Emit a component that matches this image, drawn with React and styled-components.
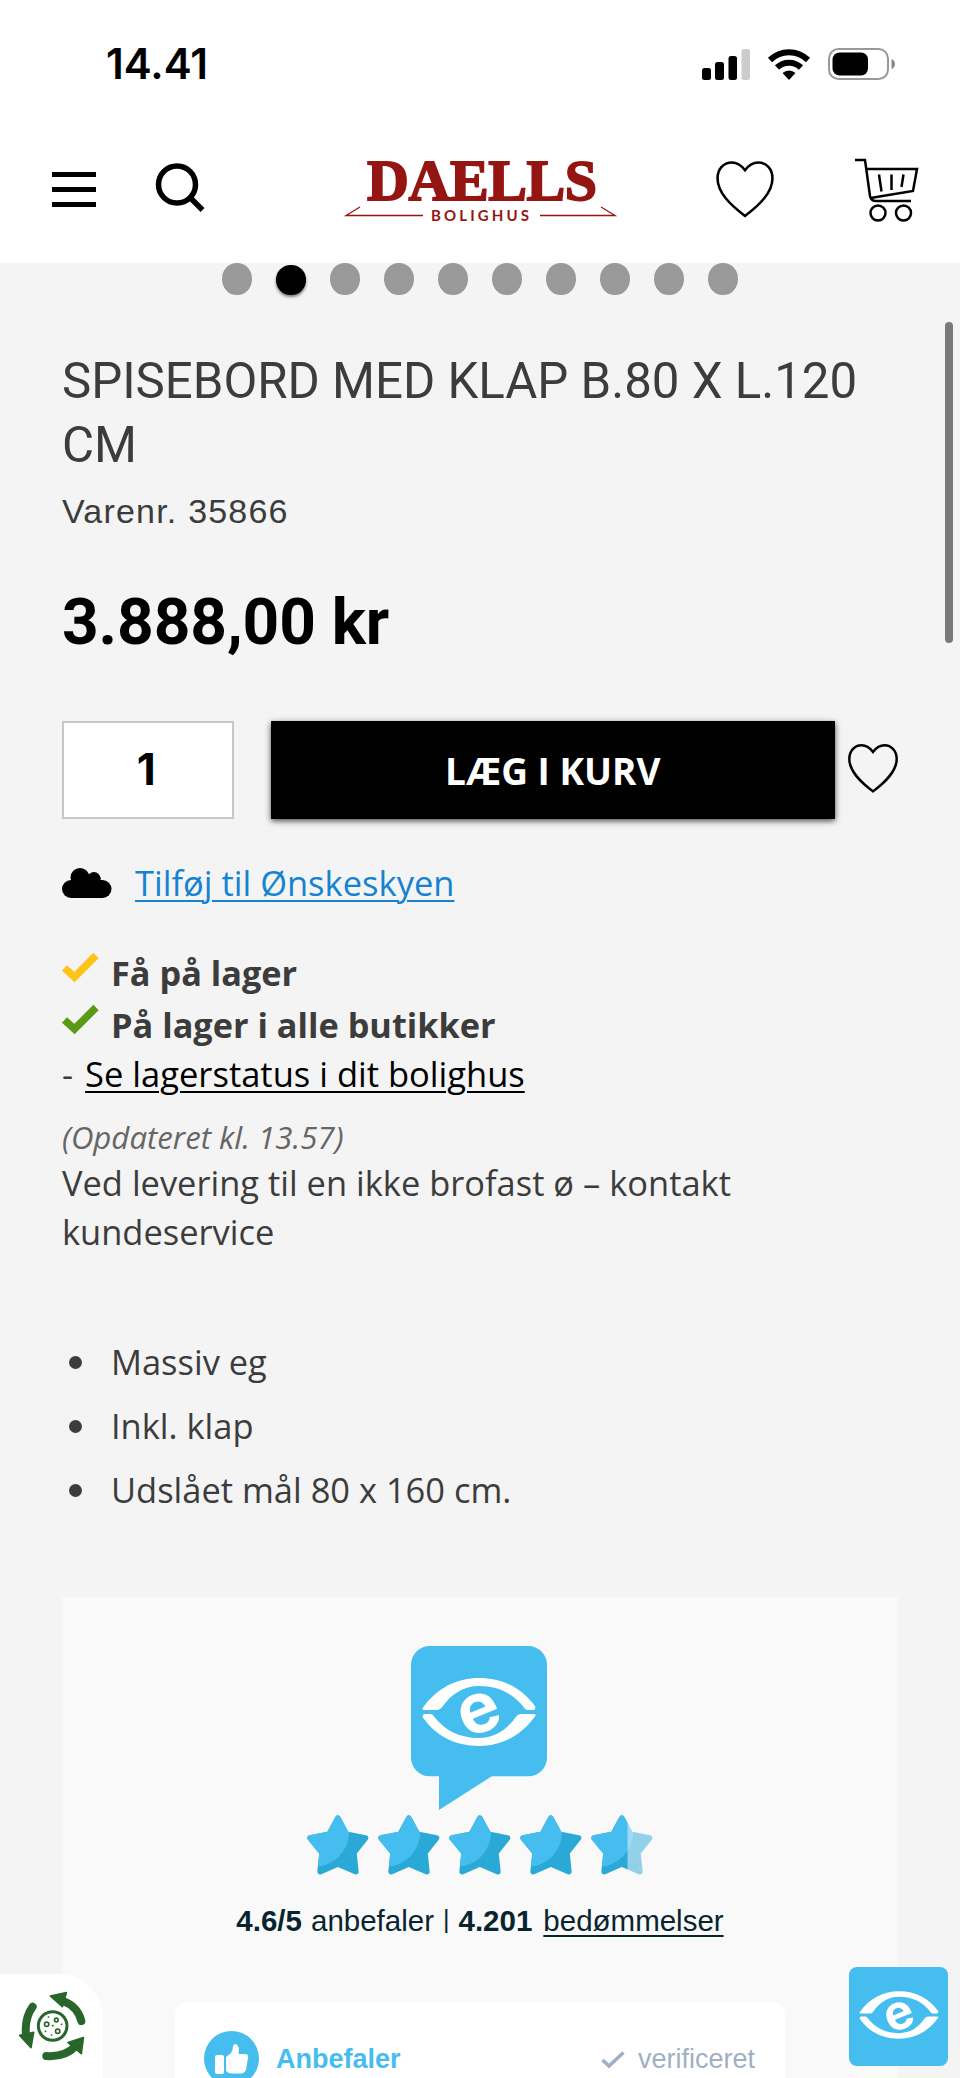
import styled, { createGlobalStyle } from 'styled-components';

const GlobalStyle = createGlobalStyle`
  * {
    box-sizing: border-box;
  }

  body {
    margin: 0;
    background-color: #f4f4f4;
    font-family: 'Open Sans', sans-serif;
    color: #3c3c3c;
  }

  svg {
    flex-shrink: 0;
    overflow: visible;
  }
`;

const Page = styled.div`
  position: relative;
  width: 960px;
  height: 2078px;
  overflow: hidden;
  background-color: #f4f4f4;
`;

const StatusBar = styled.div`
  display: flex;
  align-items: center;
  justify-content: space-between;
  height: 128px;
  padding: 0 65px 0 106px;
  background-color: white;
`;

const Clock = styled.div`
  font-family: 'Inter', sans-serif;
  font-size: 42px;
  font-weight: 600;
  line-height: 50px;
  color: black;
`;

const StatusIcons = styled.div`
  display: flex;
  align-items: center;
  gap: 18px;
`;

const Header = styled.div`
  display: flex;
  align-items: flex-start;
  height: 135px;
  padding: 29px 40px 0 52px;
  background-color: white;
`;

const MenuIcon = styled.div`
  display: flex;
  flex-direction: column;
  gap: 10px;
  width: 44px;
  margin: 15px 59px 0 0;
`;

const MenuLine = styled.div`
  height: 5px;
  background-color: black;
`;

const SearchIcon = styled.svg`
  margin: 5px 140px 0 0;
`;

const Logo = styled.svg`
  margin-right: 99px;
`;

const HeaderHeart = styled.svg`
  margin: 4px 80px 0 0;
`;

const Dots = styled.div`
  display: flex;
  justify-content: center;
  gap: 24.500px;
  height: 34px;
`;

const Dot = styled.div`
  width: 29.500px;
  height: ${({ $active }) => ($active ? '29.5px' : '31.5px')};
  margin-top: ${({ $active }) => ($active ? '2px' : '0')};
  border-radius: 50%;
  background-color: ${({ $active }) => ($active ? 'black' : '#999')};
  box-shadow: ${({ $active }) => ($active ? '0 2px 3px rgba(0, 0, 0, 0.5)' : 'none')};
`;

const Product = styled.div`
  display: flex;
  flex-direction: column;
  padding: 52px 62px 0;
`;

const Title = styled.h1`
  margin: 0;
  font-family: 'Roboto', sans-serif;
  font-size: 49.200px;
  font-weight: 400;
  line-height: 64px;
`;

const ItemNumber = styled.div`
  margin-top: 12px;
  font-family: 'Liberation Sans', sans-serif;
  font-size: 34px;
  line-height: 44px;
  letter-spacing: 1.200px;
`;

const Price = styled.div`
  margin-top: 52px;
  font-family: 'Roboto', sans-serif;
  font-size: 64px;
  font-weight: 700;
  line-height: 76px;
  letter-spacing: -0.100px;
  color: black;
`;

const BuyRow = styled.div`
  display: flex;
  align-items: flex-start;
  margin-top: 60px;
`;

const Quantity = styled.div`
  width: 172px;
  height: 98px;
  margin-right: 37px;
  padding-right: 3px;
  border: 2px solid #c6c6c6;
  background-color: white;
  font-family: 'Inter', sans-serif;
  font-size: 44px;
  font-weight: 700;
  line-height: 92px;
  text-align: center;
  color: black;
`;

const BuyButton = styled.button`
  width: 566px;
  height: 98px;
  margin-right: 12px;
  padding: 0;
  border: none;
  background-color: black;
  box-shadow: 0 2px 6px rgba(0, 0, 0, 0.7);
  font-family: 'Open Sans', sans-serif;
  font-size: 37px;
  font-weight: 700;
  color: white;
`;

const BuyHeart = styled.svg`
  margin: 23px 0 0 1px;
`;

const WishRow = styled.div`
  display: flex;
  align-items: center;
  gap: 23px;
  height: 48px;
  margin-top: 40px;
`;

const WishLink = styled.a`
  font-size: 34.500px;
  line-height: 48px;
  color: #1583d0;
  text-decoration: underline;
  text-decoration-thickness: 2px;
  text-underline-offset: 4px;
`;

const Stock = styled.div`
  margin-top: 40px;
`;

const StockRow = styled.div`
  display: flex;
  gap: 11px;
  height: ${({ $height }) => $height}px;
  font-size: 34.300px;
  font-weight: 700;
  line-height: 52px;

  svg {
    margin-top: 5px;
  }
`;

const StoreRow = styled.div`
  display: flex;
  gap: 12px;
  font-size: 34.500px;
  line-height: 49px;
`;

const StoreLink = styled.a`
  color: black;
  text-decoration: underline;
  text-decoration-thickness: 2px;
  text-underline-offset: 4px;
`;

const Updated = styled.div`
  margin-top: 18px;
  font-size: 31.200px;
  font-style: italic;
  line-height: 42px;
  color: #666;
`;

const Delivery = styled.div`
  font-size: 34.450px;
  line-height: 49px;
`;

const Features = styled.ul`
  display: flex;
  flex-direction: column;
  margin: 74px 0 0;
  padding: 0 0 0 7px;
  list-style: none;
`;

const Feature = styled.li`
  display: flex;
  align-items: center;
  gap: 29px;
  font-size: 34.450px;
  line-height: 64px;

  &::before {
    content: '';
    width: 13px;
    height: 13px;
    border-radius: 50%;
    background-color: #3c3c3c;
  }
`;

const Reviews = styled.div`
  display: flex;
  flex-direction: column;
  align-items: center;
  height: 520px;
  margin-top: 75px;
  padding-top: 49px;
  background-color: #f9f9f9;
`;

const Bubble = styled.svg`
  margin-right: 2px;
`;

const Stars = styled.div`
  display: flex;
  gap: 9px;
  margin: 5px 0 0;
`;

const Score = styled.div`
  display: flex;
  gap: 9px;
  margin-top: 25px;
  font-family: 'Liberation Sans', sans-serif;
  font-size: 29.500px;
  line-height: 42px;
  color: #08252f;
`;

const Divider = styled.span`
  font-size: 25px;
  line-height: 38px;
`;

const ReviewLink = styled.a`
  margin-left: 2px;
  text-decoration: underline;
  text-decoration-thickness: 2px;
  text-underline-offset: 4px;
`;

const Review = styled.div`
  display: flex;
  align-items: center;
  width: 610px;
  height: 113px;
  margin-top: 60px;
  padding: 0 29px;
  border-radius: 12px;
  background-color: white;
  font-family: 'Liberation Sans', sans-serif;
  font-size: 27px;
`;

const ThumbCircle = styled.div`
  display: flex;
  align-items: center;
  justify-content: center;
  width: 55px;
  height: 55px;
  margin-right: 17px;
  border-radius: 50%;
  background-color: #45bdee;
`;

const Recommends = styled.div`
  flex: 1;
  padding-top: 2px;
  font-weight: 700;
  color: #45bdee;
`;

const Verified = styled.div`
  display: flex;
  align-items: center;
  gap: 13px;
  padding: 2px 1px 0 0;
  color: #9fb0c3;
`;

const Scrollbar = styled.div`
  position: absolute;
  top: 322px;
  right: 7px;
  width: 8px;
  height: 321px;
  border-radius: 4px;
  background-color: #7a7a7a;
`;

const CookieButton = styled.div`
  position: absolute;
  left: 0;
  bottom: 0;
  display: flex;
  width: 103px;
  height: 104px;
  padding: 16px 0 0 17px;
  border-radius: 0 44px 0 0;
  background-color: white;
`;

const EyeBadge = styled.div`
  position: absolute;
  right: 12px;
  bottom: 12px;
  display: flex;
  align-items: center;
  justify-content: center;
  width: 99px;
  height: 99px;
  padding-bottom: 3px;
  border-radius: 8px;
  background-color: #45bdee;
`;

const heartPath = 'M28.5 9 C25 4.5 20.5 1.5 15.5 1.5 C7.500 1.500 1.500 8 1.500 17 C1.500 31 14 43 28.500 54 C43 43 55.500 31 55.500 17 C55.500 8 49.500 1.500 41.500 1.500 C36.500 1.500 32 4.500 28.500 9 Z';

const Heart = ({ as: Svg, size, stroke }) => (
  <Svg width={size} height={size} viewBox="0 0 57 57" fill="none" stroke="black" strokeWidth={stroke}>
    <path d={heartPath} />
  </Svg>
);

const lidPath = 'M428 264 C470 205 530 174 597 174 C670 174 727 205 766 260 Q767 270 760 270 L742 270 Q737 270 733 264 C700 220 655 198 597 198 C550 198 514 222 486 262 Q480 270 472 270 L432 270 Q426 270 428 264 Z';

// two eyelids around a tilted e
const EyeMark = () => (
  <g fill="white">
    <path d={lidPath} />
    <path d={lidPath} transform="rotate(180 597 276)" />
    <text
      x="597"
      y="337"
      textAnchor="middle"
      fontFamily="Inter"
      fontWeight="700"
      fontSize="210"
      transform="rotate(-22 597 278)"
    >e</text>
  </g>
);

const Star = ({ partial }) => {
  const path = 'M92 10 L118 58 L175 69 L140 113 L146 170 L92 147 L39 170 L45 113 L9 69 L66 58 Z';
  return (
    <svg width="62" height="60" viewBox="0 0 185 180" strokeWidth="17" strokeLinejoin="round">
      <clipPath id="shine"><circle cx="20" cy="50" r="106" /></clipPath>
      <path d={path} fill="#2aa9d6" stroke="#2aa9d6" />
      <path d={path} fill="#45bdee" stroke="#45bdee" clipPath="url(#shine)" />
      {partial && <rect x="109" y="0" width="80" height="180" fill="#f9f9f9" opacity="0.5" />}
    </svg>
  );
};

const Check = ({ color }) => (
  <svg width="38" height="30" viewBox="0 0 38 30" fill="none" stroke={color} strokeWidth="7.500">
    <path d="M2.500 16 L12.500 25 L34 3.500" />
  </svg>
);

const features = ['Massiv eg', 'Inkl. klap', 'Udslået mål 80 x 160 cm.'];
const dots = [0, 1, 2, 3, 4, 5, 6, 7, 8, 9];

function App() {
  return (
    <Page>
      <GlobalStyle />
      <StatusBar>
        <Clock>14.41</Clock>
        <StatusIcons>
          <svg width="48" height="31" viewBox="0 0 48 31">
            <rect x="0" y="19" width="9" height="12" rx="2.500" />
            <rect x="13" y="13" width="9" height="18" rx="2.500" />
            <rect x="26.500" y="7" width="8.500" height="24" rx="2.500" />
            <rect x="39.500" y="0" width="8.500" height="31" rx="2.500" fill="#ccc" />
          </svg>
          <svg width="42" height="31" viewBox="0 0 42 31" fill="none" stroke="black" strokeWidth="6">
            <path d="M2 11 A27 27 0 0 1 40 11" />
            <path d="M9 18.500 A17.500 17.500 0 0 1 33 18.500" />
            <path d="M14.500 24 A9.500 9.500 0 0 1 27.500 24 L21 31 Z" fill="black" stroke="none" />
          </svg>
          <svg width="67" height="32" viewBox="0 0 67 32">
            <rect x="1" y="1" width="59" height="30" rx="9.500" fill="none" stroke="#999" strokeWidth="2" />
            <rect x="4.500" y="4.500" width="35.500" height="23" rx="7" />
            <path d="M63.500 11 Q67 12.500 67 16 Q67 19.500 63.500 21 Z" fill="#888" />
          </svg>
        </StatusIcons>
      </StatusBar>
      <Header>
        <MenuIcon>
          <MenuLine />
          <MenuLine />
          <MenuLine />
        </MenuIcon>
        <SearchIcon width="50" height="52" viewBox="0 0 50 52" fill="none" stroke="black" strokeWidth="5.500">
          <circle cx="22" cy="22.500" r="18.500" />
          <path d="M34.500 35 L47.500 48" />
        </SearchIcon>
        <Logo width="272" height="66" viewBox="0 0 272 66">
          <text
            x="22"
            y="42.800"
            textLength="230"
            fontFamily="Liberation Serif"
            fontWeight="700"
            fontSize="58"
            fill="#951512"
            stroke="#951512"
            strokeWidth="1.800"
          >DAELLS</text>
          <text x="86" y="63.500" textLength="98" fontFamily="Lato" fontWeight="700" fontSize="15" fill="#951512">BOLIGHUS</text>
          <path d="M15 50 L1 58.500 H78 M256 50 L270 58.500 H195" fill="none" stroke="#951512" strokeWidth="1.300" />
        </Logo>
        <Heart as={HeaderHeart} size={58} stroke={2.5} />
        <svg width="66" height="66" viewBox="0 0 66 66" fill="none" stroke="black" strokeWidth="2.500">
          <path d="M1 3 H11 L16 39 Q17 44 22 44 H57" />
          <path d="M12.500 12 H63 L59 34 L16.500 41" />
          <path d="M25 17.500 L27.500 34.500 M37.500 17.500 V33 M49.500 17.500 L47.500 30" />
          <circle cx="24" cy="56" r="7.500" />
          <circle cx="49.500" cy="56" r="7.500" />
        </svg>
      </Header>
      <Dots>
        {dots.map((dot) => <Dot key={dot} $active={dot === 1} />)}
      </Dots>
      <Product>
        <Title>SPISEBORD MED KLAP B.80 X L.120 CM</Title>
        <ItemNumber>Varenr. 35866</ItemNumber>
        <Price>3.888,00 kr</Price>
        <BuyRow>
          <Quantity>1</Quantity>
          <BuyButton>LÆG I KURV</BuyButton>
          <Heart as={BuyHeart} size={50} stroke={2.8} />
        </BuyRow>
        <WishRow>
          <svg width="50" height="31" viewBox="0 0 50 31">
            <rect x="0" y="12" width="49.500" height="18" rx="9" />
            <circle cx="18" cy="9.500" r="9.500" />
            <circle cx="32" cy="10.500" r="6.500" />
            <rect x="9" y="9" width="29.500" height="14" />
          </svg>
          <WishLink>Tilføj til Ønskeskyen</WishLink>
        </WishRow>
        <Stock>
          <StockRow $height={52}><Check color="#fcc419" />Få på lager</StockRow>
          <StockRow $height={50}><Check color="#5a9a16" />På lager i alle butikker</StockRow>
          <StoreRow>-<StoreLink>Se lagerstatus i dit bolighus</StoreLink></StoreRow>
        </Stock>
        <Updated>(Opdateret kl. 13.57)</Updated>
        <Delivery>Ved levering til en ikke brofast ø – kontakt kundeservice</Delivery>
        <Features>
          {features.map((feature) => <Feature key={feature}>{feature}</Feature>)}
        </Features>
        <Reviews>
          <Bubble width="136" height="164" viewBox="393 78 408 492">
            <rect x="393" y="78" width="408" height="391" rx="56" fill="#45bdee" />
            <path d="M477 460 V570 L635 469 V460 Z" fill="#45bdee" />
            <EyeMark />
          </Bubble>
          <Stars>
            <Star />
            <Star />
            <Star />
            <Star />
            <Star partial />
          </Stars>
          <Score>
            <b>4.6/5</b>
            <span>anbefaler</span>
            <Divider>|</Divider>
            <b>4.201</b>
            <ReviewLink>bedømmelser</ReviewLink>
          </Score>
          <Review>
            <ThumbCircle>
              <svg width="34" height="30" viewBox="0 0 34 30" fill="white">
                <rect x="0" y="11" width="9" height="19" rx="2" />
                <path d="M11 13 L16 9 Q18 6 18 2 Q19 0 21 0 Q25 2 23.500 10 H31 Q34 11 33 14 L31 26 Q30 29 27 29.500 H16 Q13 29 11 27 Z" />
              </svg>
            </ThumbCircle>
            <Recommends>Anbefaler</Recommends>
            <Verified>
              <svg width="24" height="18" viewBox="0 0 24 18" fill="none" stroke="#9fb0c3" strokeWidth="3.500">
                <path d="M1.500 9 L8 15 L22.500 1.500" />
              </svg>
              verificeret
            </Verified>
          </Review>
        </Reviews>
      </Product>
      <Scrollbar />
      <CookieButton>
        <svg width="70" height="70" viewBox="50 150 210 210" fill="none" stroke="#28662b" strokeLinecap="round" strokeLinejoin="round">
          <path d="M190 184 Q232 200 243 243 M97 200 Q72 235 77 285 M138 348 Q195 352 226 318" strokeWidth="24" />
          <path d="M150 168 L198 158 L186 200 Z M58 286 L100 277 L92 323 Z M203 308 L249 293 L243 341 Z" fill="#28662b" strokeWidth="5" />
          <circle cx="157" cy="258" r="43" strokeWidth="9" />
          <path d="M144 231 h1 M183 253 h1 M157 257 h1 M135 274 h1 M153 285 h1" strokeWidth="5" />
          <circle cx="139" cy="253" r="6.500" strokeWidth="5" />
          <circle cx="168" cy="240" r="5.500" strokeWidth="5" />
          <circle cx="172" cy="274" r="6.500" strokeWidth="5" />
        </svg>
      </CookieButton>
      <EyeBadge>
        <svg width="80" height="50" viewBox="425 172 344 208">
          <EyeMark />
        </svg>
      </EyeBadge>
    </Page>
  );
}

export default App;
